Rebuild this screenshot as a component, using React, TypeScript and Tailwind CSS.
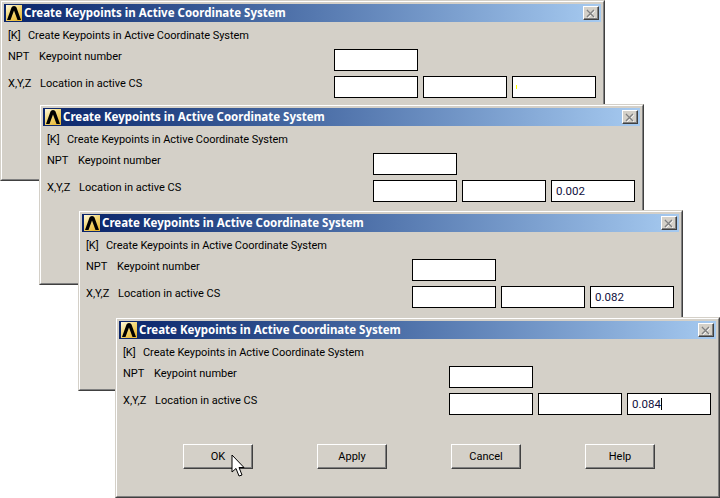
const font = "font-['Roboto',sans-serif]";

function Logo() {
  return (
    <svg width="16" height="16" viewBox="0 0 16 16" className="ml-[2px] shrink-0">
      <defs>
        <linearGradient id="logoBg" x1="0" y1="0" x2="0.7" y2="1">
          <stop offset="0" stopColor="#fdf8e0" />
          <stop offset="0.5" stopColor="#f3d878" />
          <stop offset="1" stopColor="#e8b838" />
        </linearGradient>
      </defs>
      <rect width="16" height="16" fill="url(#logoBg)" />
      <path d="M1 15 L5.5 2.6 Q6 1 8 1 Q10 1 10.5 2.6 L15 15 H11.5 L8 5.5 L4.5 15 Z" fill="#000" />
    </svg>
  );
}

function CloseButton() {
  return (
    <div className="mr-[2px] ml-auto flex h-[14px] w-[16px] items-center justify-center border-t border-r border-b border-l border-t-white border-r-[#404040] border-b-[#404040] border-l-white bg-[#d4d0c8] shadow-[inset_-1px_-1px_0_#808080]">
      <svg width="10" height="9" viewBox="0 0 10 9">
        <path d="M1 1 L8 8 M8 1 L1 8" stroke="#fff" strokeWidth="1.5" transform="translate(0.7 0.5)" />
        <path d="M1 1 L8 8 M8 1 L1 8" stroke="#808080" strokeWidth="1.5" />
      </svg>
    </div>
  );
}

function Field({ value, caret, mark }: { value?: string; caret?: boolean; mark?: boolean }) {
  return (
    <div className="flex h-[22px] w-[84px] items-center border border-black bg-white pl-[4px] text-[11.5px] text-[#101040]">
      {value}
      {caret && <span className="h-[12px] w-px bg-black" />}
      {mark && <span className="-ml-px h-[4px] w-px bg-[#ffff00]" />}
    </div>
  );
}

function PushButton({ label }: { label: string }) {
  return (
    <div className="flex h-[25px] w-[70px] items-center justify-center border-t border-r border-b border-l border-t-white border-r-[#404040] border-b-[#404040] border-l-white bg-[#d4d0c8] pt-px text-[11px] text-black shadow-[inset_-1px_-1px_0_#808080]">
      {label}
    </div>
  );
}

function Cursor() {
  return (
    <svg width="16" height="24" viewBox="0 0 16 24" className="absolute top-[135px] left-[114px]">
      <path d="M1 1 V18 L5 14.5 L8 22 L11 21 L8 13.5 H13 Z" fill="#fff" stroke="#000" strokeWidth="1" />
    </svg>
  );
}

function Dialog({
  className,
  value,
  mark,
  caret,
  buttons,
}: {
  className: string;
  value?: string;
  mark?: boolean;
  caret?: boolean;
  buttons?: boolean;
}) {
  return (
    <div className={`absolute h-[181px] w-[605px] border-t border-r border-b border-l border-t-[#d4d0c8] border-r-[#404040] border-b-[#404040] border-l-[#d4d0c8] ${className}`}>
      <div className="relative h-full w-full border-t border-r border-b border-l border-t-white border-r-[#808080] border-b-[#808080] border-l-white bg-[#d4d0c8] p-[2px]">
        <div className="flex h-[18px] items-center bg-gradient-to-r from-[#0a246a] to-[#a6caf0]">
          <Logo />
          <span className="ml-[2px] font-['Noto_Sans',sans-serif] text-[11.5px] leading-[14px] font-bold whitespace-nowrap text-white">
            Create Keypoints in Active Coordinate System
          </span>
          <CloseButton />
        </div>
        <div className="flex h-[27px] pt-[7px] pl-[4px] text-[11px] leading-[14px] tracking-[-0.05px] text-black">
          <span className="w-[20px]">[K]</span>
          <span>Create Keypoints in Active Coordinate System</span>
        </div>
        <div className="flex h-[22px] items-start pl-[4px] text-[11px] leading-[14px] text-black">
          <span className="mt-px w-[31px]">NPT</span>
          <span className="mt-px w-[295px]">Keypoint number</span>
          <Field />
        </div>
        <div className="mt-[5px] flex h-[22px] items-start pl-[4px] text-[11px] leading-[14px] text-black">
          <span className="mt-px w-[32px]">X,Y,Z</span>
          <span className="mt-px w-[294px]">Location in active CS</span>
          <div className="flex gap-[5px]">
            <Field />
            <Field />
            <Field value={value} mark={mark} caret={caret} />
          </div>
        </div>
        {buttons && (
          <div className="mt-[29px] ml-[64px] flex gap-[64px]">
            <PushButton label="OK" />
            <PushButton label="Apply" />
            <PushButton label="Cancel" />
            <PushButton label="Help" />
          </div>
        )}
        {buttons && <Cursor />}
      </div>
    </div>
  );
}

export default function App() {
  return (
    <div className={`relative h-[498px] w-[720px] overflow-hidden bg-white ${font}`}>
      <Dialog className="top-0 left-0" mark />
      <Dialog className="top-[104px] left-[39px]" value="0.002" />
      <Dialog className="top-[210px] left-[78px]" value="0.082" />
      <Dialog className="top-[317px] left-[115px]" value="0.084" caret buttons />
    </div>
  );
}
